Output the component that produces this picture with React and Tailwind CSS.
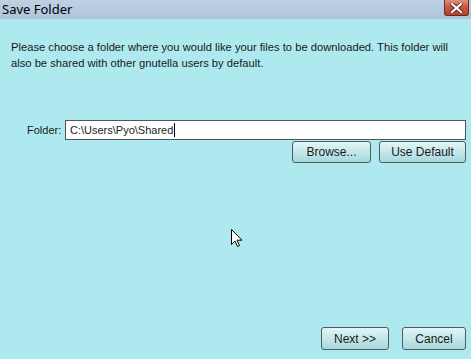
export default function App() {
  return (
    <div className="w-[471px] h-[359px] bg-[#ade9ee] flex flex-col overflow-hidden relative" style={{ fontFamily: '"Liberation Sans", Arial, sans-serif' }}>
      {/* title bar */}
      <div className="h-[19px] bg-gradient-to-b from-[#bfd0e4] to-[#aec4dc] flex items-start justify-between">
        <span className="pl-[2px] pt-[1px] text-[13px] leading-[16px] text-black" style={{ fontFamily: '"Noto Sans", sans-serif' }}>
          Save Folder
        </span>
        <div className="mr-[2px] w-[25px] h-[16px] rounded-b-[3px] border border-t-0 border-[#6b2a22] bg-gradient-to-b from-[#e0907c] via-[#c8553f] to-[#b9402c] flex items-center justify-center">
          <svg width="13" height="10" viewBox="0 0 13 10">
            <path d="M2 1 L11 9 M11 1 L2 9" stroke="#5a2a22" strokeWidth="4" strokeLinecap="square" />
            <path d="M2 1 L11 9 M11 1 L2 9" stroke="#ffffff" strokeWidth="2.2" strokeLinecap="square" />
          </svg>
        </div>
      </div>

      {/* body */}
      <div className="flex-1 flex flex-col px-[11px] pt-[20px] pb-[9px] text-[11px] text-[#1a1a1a]">
        <p className="leading-[16px] text-[11.2px]">
          Please choose a folder where you would like your files to be downloaded. This folder will also be shared with other gnutella users by default.
        </p>

        <div className="mt-[49px] flex items-center pl-[16px] mr-[-6px]">
          <span className="w-[38px]">Folder:</span>
          <div className="flex-1 h-[20px] bg-white border border-[#4d5555] flex items-center pl-[4px] text-[11px] text-[#222]">
            C:\Users\Pyo\Shared
            <span className="w-px h-[14px] bg-black ml-[1px]"></span>
          </div>
        </div>

        <div className="mt-px flex justify-end gap-[8px] mr-[-6px]">
          <button className="w-[79px] h-[22px] rounded-[3px] border border-[#4f5d5f] bg-gradient-to-b from-[#e3f6f7] to-[#a5d8dc] text-[12px] text-[#1a1a1a]">
            Browse...
          </button>
          <button className="w-[87px] h-[22px] rounded-[3px] border border-[#4f5d5f] bg-gradient-to-b from-[#e3f6f7] to-[#a5d8dc] text-[12px] text-[#1a1a1a]">
            Use Default
          </button>
        </div>

        <div className="mt-auto flex justify-end gap-[13px] mr-[-6px]">
          <button className="w-[68px] h-[23px] rounded-[3px] border border-[#4f5d5f] bg-gradient-to-b from-[#e3f6f7] to-[#a5d8dc] text-[12px] text-[#1a1a1a]">
            Next &gt;&gt;
          </button>
          <button className="w-[64px] h-[23px] rounded-[3px] border border-[#4f5d5f] bg-gradient-to-b from-[#e3f6f7] to-[#a5d8dc] text-[12px] text-[#1a1a1a]">
            Cancel
          </button>
        </div>
      </div>

      {/* mouse cursor */}
      <svg className="absolute left-[231px] top-[229px]" width="12" height="19" viewBox="0 0 12 19">
        <path d="M0.5 0.5 L0.5 15.5 L4 12 L6.5 17.5 L8.5 16.5 L6 11.2 L11 11.2 Z" fill="#ffffff" stroke="#000000" strokeWidth="1" strokeLinejoin="miter" />
      </svg>
    </div>
  );
}
